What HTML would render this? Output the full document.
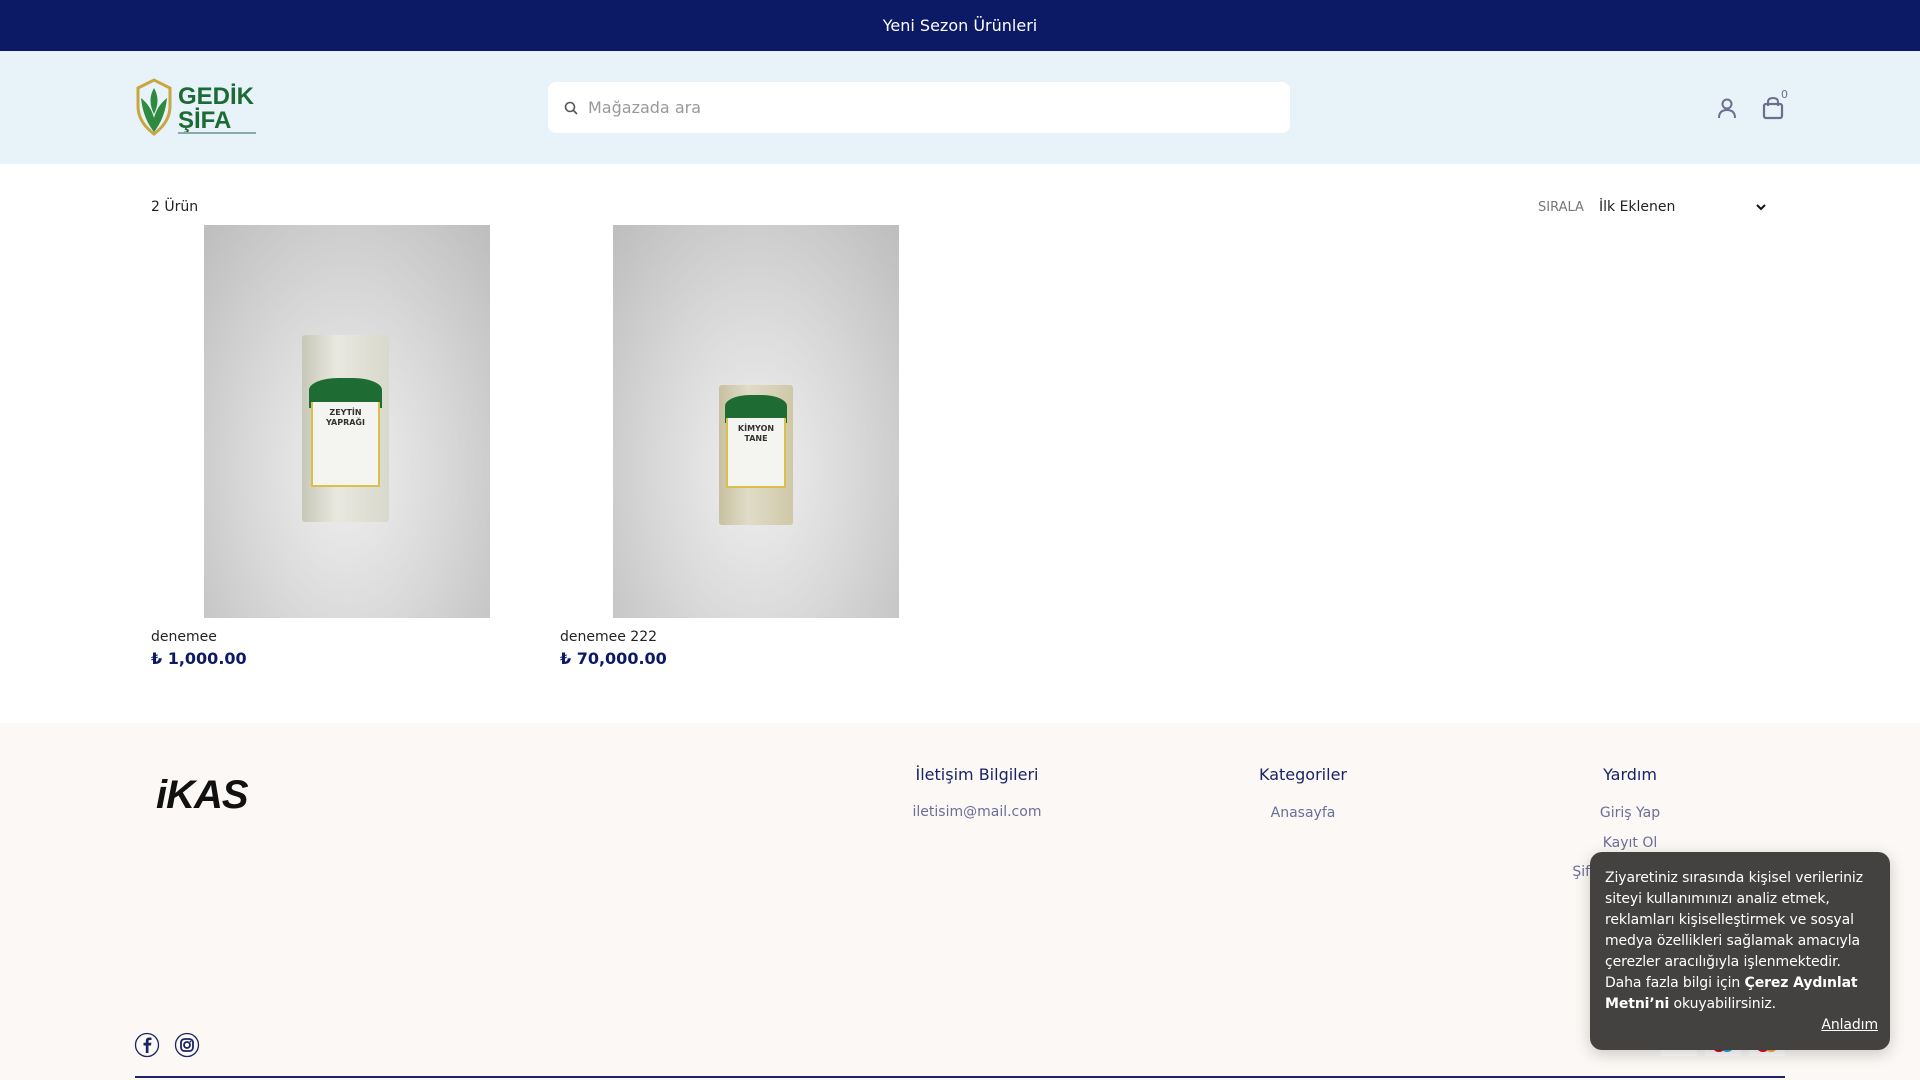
<!DOCTYPE html>
<html><head><meta charset="utf-8"><style>
*{margin:0;padding:0;box-sizing:border-box}
body{width:1920px;height:1080px;overflow:hidden;font-family:"DejaVu Sans","Liberation Sans",sans-serif;background:#fff;position:relative;color:#222}
.abs{position:absolute}
.top{left:0;top:0;width:1920px;height:51px;background:#0c1a66;color:#fff;font-size:16px;text-align:center;line-height:51px}
.hdr{left:0;top:51px;width:1920px;height:113px;background:#e8f2f9}
.search{left:548px;top:82px;width:742px;height:51px;background:#fff;border-radius:8px}
.search span{position:absolute;left:40px;top:16px;font-size:16px;color:#999}
.img{background:radial-gradient(ellipse at 50% 62%,#f0f0f0 0%,#d8d8d8 50%,#bdbdbd 100%)}
.pkg{position:absolute;background:linear-gradient(90deg,#c8c8b8,#e8e8e0 40%,#d8d8cc);border-radius:3px}
.pkg .g{position:absolute;left:8%;right:8%;background:#1f6b34;border-radius:40% 40% 0 0}
.pkg .w{position:absolute;left:10%;right:10%;background:#f4f4f0;border:2px solid #d8c04a;border-top:none;font-size:8px;font-weight:bold;text-align:center;color:#333;padding-top:6px;line-height:10px}
.name{font-size:14px;color:#222}
.price{font-size:16px;font-weight:bold;color:#0c1a66}
.foot{left:0;top:723px;width:1920px;height:357px;background:#fcf8f5}
.fh{font-size:16px;color:#1a2466;text-align:center;width:300px}
.fl{font-size:14px;color:#6a6f99;text-align:center;width:300px}
.cookie{left:1590px;top:852px;width:300px;height:198px;background:#434240;border-radius:12px;color:#fff;font-size:14px;line-height:21px;padding:16px 12px 10px 15px;box-shadow:0 4px 16px rgba(0,0,0,.2);letter-spacing:-0.1px}
</style></head><body>
<div class="abs top">Yeni Sezon Ürünleri</div>
<div class="abs hdr"></div>
<svg class="abs" style="left:135px;top:78px" width="125" height="62" viewBox="0 0 125 62">
<path d="M3 10 L19 2 L35 10 L35 28 Q35 44 19 56 Q3 44 3 28Z" fill="none" stroke="#c9a640" stroke-width="3"/>
<path d="M19 54 Q8 40 6 20 Q16 28 19 40Z M19 54 Q30 40 32 20 Q22 28 19 40Z M19 36 Q12 22 19 10 Q26 22 19 36Z" fill="#2d8a3e"/>
<text x="43" y="26" font-family="Liberation Sans" font-weight="bold" font-size="24" fill="#1d6b34">GEDİK</text>
<text x="43" y="50" font-family="Liberation Sans" font-weight="bold" font-size="24" fill="#1d6b34">ŞİFA</text>
<rect x="43" y="54" width="78" height="2" fill="#8aa"/></svg>
<div class="abs search"><svg style="position:absolute;left:16px;top:19px" width="14" height="14" viewBox="0 0 14 14"><circle cx="6" cy="6" r="4.5" fill="none" stroke="#555" stroke-width="1.6"/><path d="M9.5 9.5L13 13" stroke="#555" stroke-width="1.6"/></svg><span>Mağazada ara</span></div>
<svg class="abs" style="left:1716px;top:97px" width="22" height="22" viewBox="0 0 22 22"><circle cx="11" cy="7" r="4.5" fill="none" stroke="#6b6f8c" stroke-width="2"/><path d="M3 21 Q3 13 11 13 Q19 13 19 21" fill="none" stroke="#6b6f8c" stroke-width="2"/></svg>
<svg class="abs" style="left:1762px;top:96px" width="22" height="24" viewBox="0 0 22 24"><rect x="2" y="8" width="18" height="14" rx="2" fill="none" stroke="#6b6f8c" stroke-width="2.2"/><path d="M6 10 V6 Q6 2 11 2 Q16 2 16 6 V10" fill="none" stroke="#6b6f8c" stroke-width="2"/></svg>
<div class="abs" style="left:1781px;top:88px;font-size:11px;color:#6b6f8c">0</div>

<div class="abs" style="left:151px;top:199px;font-size:14px">2 Ürün</div>
<div class="abs" style="left:1538px;top:200px;font-size:13px;color:#777">SIRALA</div>
<div class="abs" style="left:1599px;top:199px;font-size:14px">İlk Eklenen</div>
<svg class="abs" style="left:1755px;top:203px" width="12" height="8" viewBox="0 0 12 8"><path d="M2 2L6 6L10 2" fill="none" stroke="#111" stroke-width="2"/></svg>

<div class="abs img" style="left:204px;top:225px;width:286px;height:393px">
 <div class="pkg" style="left:98px;top:110px;width:87px;height:187px"><div class="g" style="top:43px;height:30px"></div><div class="w" style="top:67px;height:85px">ZEYTİN<br>YAPRAĞI</div></div>
</div>
<div class="abs img" style="left:613px;top:225px;width:286px;height:393px">
 <div class="pkg" style="left:106px;top:160px;width:74px;height:140px;background:linear-gradient(90deg,#c8c0a0,#e0dcc8 40%,#cfc8a8)"><div class="g" style="top:10px;height:28px"></div><div class="w" style="top:33px;height:70px">KİMYON<br>TANE</div></div>
</div>
<div class="abs name" style="left:151px;top:629px">denemee</div>
<div class="abs price" style="left:151px;top:649px">₺ 1,000.00</div>
<div class="abs name" style="left:560px;top:629px">denemee 222</div>
<div class="abs price" style="left:560px;top:649px">₺ 70,000.00</div>

<div class="abs foot"></div>
<svg class="abs" style="left:150px;top:764px" width="100" height="52" viewBox="0 0 100 52"><text x="6" y="44" font-family="Liberation Sans" font-weight="bold" font-style="italic" font-size="40" fill="#111" letter-spacing="-1">iKAS</text></svg>
<div class="abs fh" style="left:827px;top:765px">İletişim Bilgileri</div>
<div class="abs fl" style="left:827px;top:804px">iletisim@mail.com</div>
<div class="abs fh" style="left:1153px;top:765px">Kategoriler</div>
<div class="abs fl" style="left:1153px;top:805px">Anasayfa</div>
<div class="abs fh" style="left:1480px;top:765px">Yardım</div>
<div class="abs fl" style="left:1480px;top:805px">Giriş Yap</div>
<div class="abs fl" style="left:1480px;top:835px">Kayıt Ol</div>
<div class="abs fl" style="left:1480px;top:864px">Şifremi Unuttum</div>

<svg class="abs" style="left:134px;top:1032px" width="26" height="26" viewBox="0 0 26 26"><circle cx="13" cy="13" r="11.5" fill="none" stroke="#1a2466" stroke-width="1.3"/><path d="M14.5 21V13.5H17L17.4 10.8H14.5V9.2Q14.5 8 15.8 8H17.5V5.6Q16.5 5.5 15.3 5.5Q11.8 5.5 11.8 9V10.8H9.5V13.5H11.8V21Z" fill="#1a2466"/></svg>
<svg class="abs" style="left:174px;top:1032px" width="26" height="26" viewBox="0 0 26 26"><circle cx="13" cy="13" r="11.5" fill="none" stroke="#1a2466" stroke-width="1.3"/><rect x="7" y="7" width="12" height="12" rx="3.5" fill="none" stroke="#1a2466" stroke-width="1.8"/><circle cx="13" cy="13" r="3" fill="none" stroke="#1a2466" stroke-width="1.8"/><circle cx="16.5" cy="9.5" r=".9" fill="#1a2466"/></svg>
<div class="abs" style="left:1661px;top:1034px;width:36px;height:22px;background:#fff;font:italic bold 12px 'Liberation Sans';color:#1a1f71;text-align:center;line-height:22px">VISA</div>
<svg class="abs" style="left:1705px;top:1034px" width="36" height="22"><rect width="36" height="22" fill="#fff"/><circle cx="14" cy="11" r="7" fill="#d8001a"/><circle cx="22" cy="11" r="7" fill="#0099df" opacity=".9"/></svg>
<svg class="abs" style="left:1749px;top:1034px" width="36" height="22"><rect width="36" height="22" fill="#fff"/><circle cx="14" cy="11" r="7" fill="#eb001b"/><circle cx="22" cy="11" r="7" fill="#f79e1b" opacity=".9"/></svg>
<div class="abs" style="left:135px;top:1076px;width:1650px;height:2px;background:#1a2466"></div>

<div class="abs cookie">Ziyaretiniz sırasında kişisel verileriniz siteyi kullanımınızı analiz etmek, reklamları kişiselleştirmek ve sosyal medya özellikleri sağlamak amacıyla çerezler aracılığıyla işlenmektedir. Daha fazla bilgi için <b>Çerez Aydınlat Metni’ni</b> okuyabilirsiniz.
<div style="text-align:right;text-decoration:underline">Anladım</div></div>
</body></html>
